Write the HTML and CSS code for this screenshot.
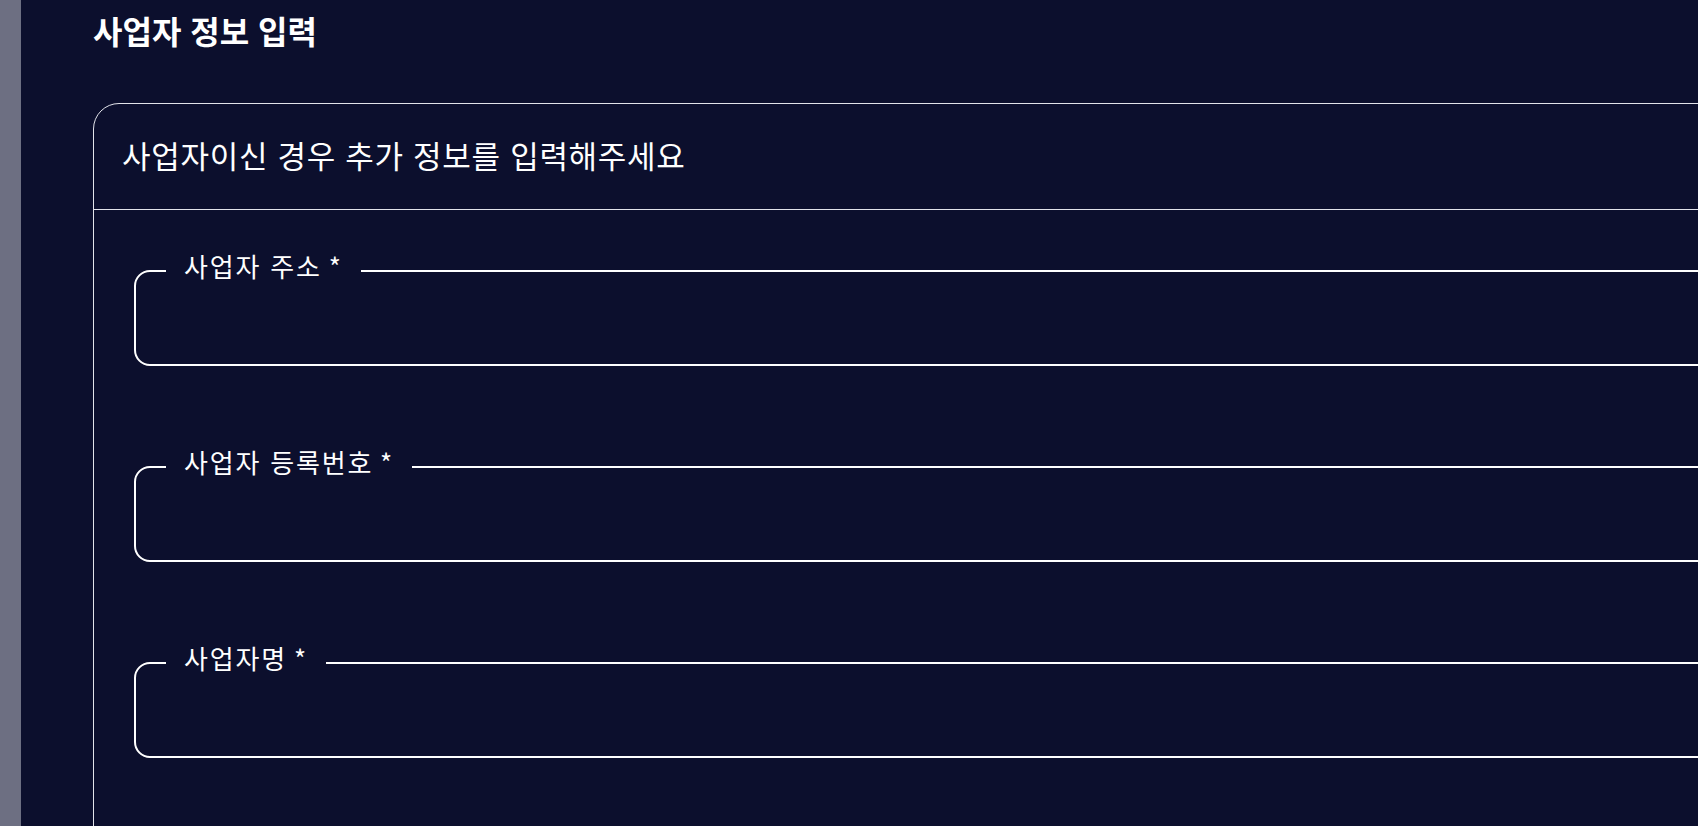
FILE: index.html
```html
<!DOCTYPE html>
<html lang="ko">
  <head>
    <meta charset="UTF-8" />
    <meta name="viewport" content="width=device-width, initial-scale=1.0" />
    <title>사업자 정보 입력</title>
    <link rel="stylesheet" href="styles.css">
  </head>
  <body>
    <div class="layout">
      <div class="rail"></div>

      <main class="main">
        <h1 class="title">사업자 정보 입력</h1>

        <section class="card">
          <div class="card-header">사업자이신 경우 추가 정보를 입력해주세요</div>

          <!-- Business fields -->
          <div class="card-body">
            <fieldset class="field">
              <legend class="field-label">사업자 주소&thinsp;*</legend>
              <input class="field-input" type="text" id="address" />
            </fieldset>

            <fieldset class="field">
              <legend class="field-label">사업자 등록번호&thinsp;*</legend>
              <input class="field-input" type="text" id="regNumber" />
            </fieldset>

            <fieldset class="field">
              <legend class="field-label">사업자명&thinsp;*</legend>
              <input class="field-input" type="text" id="companyName" />
            </fieldset>
          </div>
        </section>
      </main>
    </div>
  </body>
</html>
```

FILE: styles.css
```css
body {
  margin: 0;
  padding: 0;
  box-sizing: border-box;
  background-color: rgb(12, 15, 45);
  color: white;
  font-family: "Noto Sans CJK KR", "Noto Sans", sans-serif;
  overflow: hidden;
}

.layout {
  display: flex;
  min-height: 100vh;
}

.rail {
  width: 21px;
  flex-shrink: 0;
  background-color: rgb(109, 111, 130);
}

.main {
  flex: 1;
  padding: 7px 0 0 72px;
}

.title {
  margin: 0;
  font-size: 32px;
  font-weight: 700;
  line-height: 46px;
}

.card {
  width: 1800px;
  margin-top: 50px;
  border: 1px solid rgb(226, 227, 234);
  border-radius: 26px;
}

.card-header {
  height: 106px;
  box-sizing: border-box;
  display: flex;
  align-items: center;
  padding: 0 28px 4px;
  font-size: 31px;
  letter-spacing: 0.7px;
  border-bottom: 1px solid rgb(226, 227, 234);
}

.card-body {
  display: flex;
  flex-direction: column;
  gap: 81px;
  padding: 41px 40px 120px;
}

.field {
  margin: 0;
  min-width: 0;
  padding: 0 26px;
  border: 2px solid white;
  border-radius: 16px;
}

.field-label {
  margin-left: 4px;
  padding: 0 18px 9px 18px;
  font-size: 26px;
  line-height: 30px;
  letter-spacing: 1.8px;
}

.field-input {
  display: block;
  width: 100%;
  height: 74px;
  padding: 0;
  border: none;
  outline: none;
  background: transparent;
  color: white;
  font-family: inherit;
  font-size: 26px;
}
```
